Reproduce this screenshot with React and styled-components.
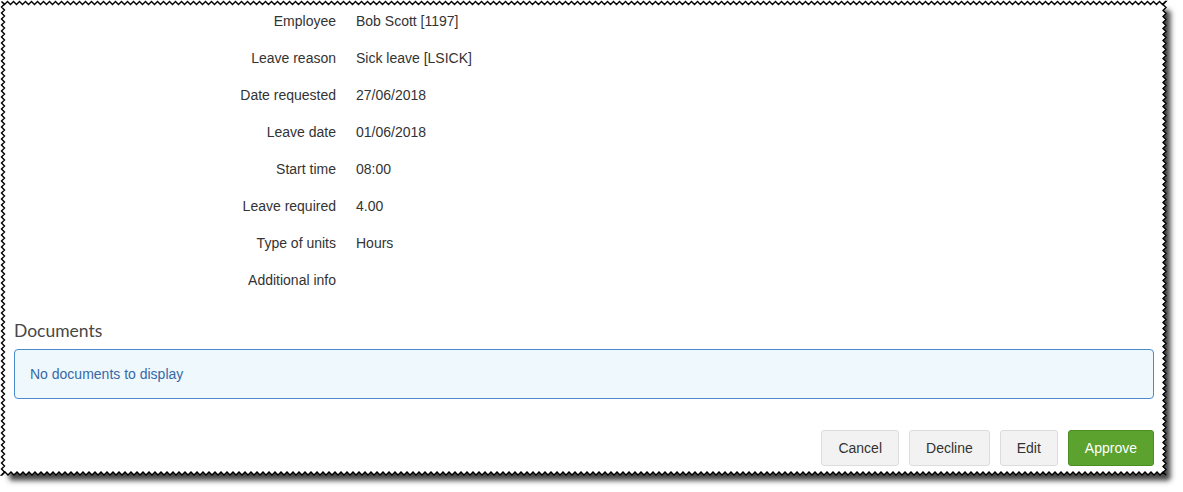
import React from 'react';
import styled, { createGlobalStyle } from 'styled-components';

const GlobalStyle = createGlobalStyle`
  html, body {
    margin: 0;
    padding: 0;
    background: #ffffff;
  }
  body {
    font-family: "Liberation Sans", Arial, sans-serif;
    font-size: 14px;
    color: #333333;
  }
`;

const Page = styled.div`
  position: relative;
  width: 1183px;
  height: 492px;
  overflow: hidden;
`;

const Frame = styled.svg`
  position: absolute;
  left: 0;
  top: 0;
  pointer-events: none;
`;

const Paper = styled.div`
  position: relative;
  width: 1140px;
  padding: 11px 14px 0 14px;
`;

const Details = styled.div`
  display: grid;
  grid-template-columns: 322px 1fr;
  column-gap: 20px;
  row-gap: 17px;
`;

const Label = styled.div`
  text-align: right;
  line-height: 20px;
  color: #333333;
`;

const Value = styled.div`
  line-height: 20px;
  color: #333333;
`;

const Heading = styled.h3`
  margin: 31px 0 9px 0;
  font-family: Lato, "Open Sans", sans-serif;
  font-weight: 400;
  font-size: 17.5px;
  line-height: 19px;
  color: #474747;
`;

const InfoBox = styled.div`
  height: 48px;
  display: flex;
  align-items: center;
  padding: 0 15px;
  border: 1px solid #4a8bcb;
  border-radius: 4px;
  background: #eff8fd;
  color: #3669a5;
`;

const Actions = styled.div`
  display: flex;
  justify-content: flex-end;
  gap: 10px;
  margin-top: 31px;
`;

const Button = styled.button`
  height: 36px;
  padding: 0 16px;
  font-family: "Liberation Sans", Arial, sans-serif;
  font-size: 14px;
  border-radius: 3px;
  border: 1px solid ${(p) => (p.primary ? '#4c8c25' : '#dcdcdc')};
  background: ${(p) => (p.primary ? '#5ba22e' : '#f2f2f2')};
  color: ${(p) => (p.primary ? '#ffffff' : '#333333')};
  cursor: pointer;
`;

const rows = [
  ['Employee', 'Bob Scott [1197]'],
  ['Leave reason', 'Sick leave [LSICK]'],
  ['Date requested', '27/06/2018'],
  ['Leave date', '01/06/2018'],
  ['Start time', '08:00'],
  ['Leave required', '4.00'],
  ['Type of units', 'Hours'],
  ['Additional info', ''],
];

// torn-paper outline: zigzag on every side
function tornEdge(x0, y0, x1, y1, step, amp) {
  const pts = [];
  let i = 0;
  for (let x = x0; x < x1; x += step, i++) pts.push([x, i % 2 ? y0 + amp : y0]);
  i = 0;
  for (let y = y0; y < y1; y += step, i++) pts.push([i % 2 ? x1 - amp : x1, y]);
  i = 0;
  for (let x = x1; x > x0; x -= step, i++) pts.push([x, i % 2 ? y1 - amp : y1]);
  i = 0;
  for (let y = y1; y > y0; y -= step, i++) pts.push([i % 2 ? x0 + amp : x0, y]);
  return pts.map((p) => p.join(',')).join(' ');
}

function TornFrame() {
  const outline = tornEdge(1.5, 1.5, 1166, 475, 3, 3);
  return (
    <Frame width="1183" height="492" viewBox="0 0 1183 492">
      <defs>
        <filter id="blur" x="-5%" y="-5%" width="110%" height="110%">
          <feGaussianBlur stdDeviation="2.5" />
        </filter>
      </defs>
      <polygon points={outline} fill="#444" transform="translate(6,7)" filter="url(#blur)" />
      <polygon points={outline} fill="#fff" stroke="#000" strokeWidth="1.4" />
    </Frame>
  );
}

export default function App() {
  return (
    <>
      <GlobalStyle />
      <Page>
        <TornFrame />
        <Paper>
          <Details>
            {rows.map(([label, value]) => (
              <React.Fragment key={label}>
                <Label>{label}</Label>
                <Value>{value}</Value>
              </React.Fragment>
            ))}
          </Details>
          <Heading>Documents</Heading>
          <InfoBox>No documents to display</InfoBox>
          <Actions>
            <Button>Cancel</Button>
            <Button>Decline</Button>
            <Button>Edit</Button>
            <Button primary>Approve</Button>
          </Actions>
        </Paper>
      </Page>
    </>
  );
}
